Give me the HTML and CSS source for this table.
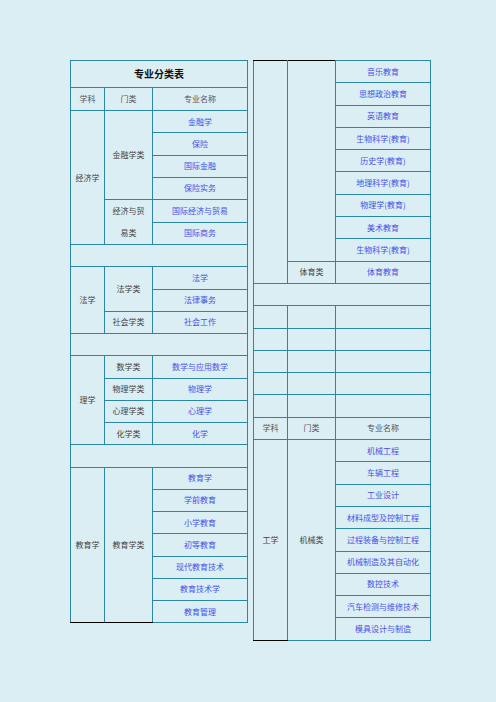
FILE: index.html
```html
<!DOCTYPE html>
<html lang="zh-CN">
<head>
<meta charset="utf-8">
<title>专业分类表</title>
<link rel="stylesheet" href="styles.css">
</head>
<body>
<div class="page">
  <table class="tbl tbl-left">
    <colgroup><col class="c1"><col class="c2"><col class="c3"></colgroup>
    <tr class="title-row"><td colspan="3" class="title">专业分类表</td></tr>
    <tr class="head-row"><td class="hd">学科</td><td class="hd">门类</td><td class="hd">专业名称</td></tr>
    <tr><td rowspan="6" class="cat">经济学</td><td rowspan="4" class="cat">金融学类</td><td class="major">金融学</td></tr>
    <tr><td class="major">保险</td></tr>
    <tr><td class="major">国际金融</td></tr>
    <tr><td class="major">保险实务</td></tr>
    <tr><td rowspan="2" class="cat wrap">经济与贸易类</td><td class="major">国际经济与贸易</td></tr>
    <tr><td class="major">国际商务</td></tr>
    <tr><td colspan="3"></td></tr>
    <tr><td rowspan="3" class="cat">法学</td><td rowspan="2" class="cat">法学类</td><td class="major">法学</td></tr>
    <tr><td class="major">法律事务</td></tr>
    <tr><td class="cat">社会学类</td><td class="major">社会工作</td></tr>
    <tr><td colspan="3"></td></tr>
    <tr><td rowspan="4" class="cat">理学</td><td class="cat">数学类</td><td class="major">数学与应用数学</td></tr>
    <tr><td class="cat">物理学类</td><td class="major">物理学</td></tr>
    <tr><td class="cat">心理学类</td><td class="major">心理学</td></tr>
    <tr><td class="cat">化学类</td><td class="major">化学</td></tr>
    <tr><td colspan="3"></td></tr>
    <tr><td rowspan="7" class="cat end">教育学</td><td rowspan="7" class="cat end">教育学类</td><td class="major">教育学</td></tr>
    <tr><td class="major">学前教育</td></tr>
    <tr><td class="major">小学教育</td></tr>
    <tr><td class="major">初等教育</td></tr>
    <tr><td class="major">现代教育技术</td></tr>
    <tr><td class="major">教育技术学</td></tr>
    <tr><td class="major">教育管理</td></tr>
  </table>

  <table class="tbl tbl-right">
    <colgroup><col class="c1"><col class="c2"><col class="c3"></colgroup>
    <tr><td rowspan="10" class="cat start"></td><td rowspan="9" class="cat start"></td><td class="major">音乐教育</td></tr>
    <tr><td class="major">思想政治教育</td></tr>
    <tr><td class="major">英语教育</td></tr>
    <tr><td class="major">生物科学(教育)</td></tr>
    <tr><td class="major">历史学(教育)</td></tr>
    <tr><td class="major">地理科学(教育)</td></tr>
    <tr><td class="major">物理学(教育)</td></tr>
    <tr><td class="major">美术教育</td></tr>
    <tr><td class="major">生物科学(教育)</td></tr>
    <tr><td class="cat">体育类</td><td class="major">体育教育</td></tr>
    <tr><td colspan="3"></td></tr>
    <tr><td></td><td></td><td></td></tr>
    <tr><td></td><td></td><td></td></tr>
    <tr><td></td><td></td><td></td></tr>
    <tr><td></td><td></td><td></td></tr>
    <tr><td></td><td></td><td></td></tr>
    <tr class="head-row2"><td class="hd">学科</td><td class="hd">门类</td><td class="hd">专业名称</td></tr>
    <tr><td rowspan="9" class="cat end">工学</td><td rowspan="9" class="cat">机械类</td><td class="major">机械工程</td></tr>
    <tr><td class="major">车辆工程</td></tr>
    <tr><td class="major">工业设计</td></tr>
    <tr><td class="major">材料成型及控制工程</td></tr>
    <tr><td class="major">过程装备与控制工程</td></tr>
    <tr><td class="major">机械制造及其自动化</td></tr>
    <tr><td class="major">数控技术</td></tr>
    <tr><td class="major">汽车检测与维修技术</td></tr>
    <tr><td class="major">模具设计与制造</td></tr>
  </table>
</div>
</body>
</html>
```

FILE: styles.css
```css
html, body {
  margin: 0;
  padding: 0;
  background: #dbeef4;
}

.page {
  display: flex;
  align-items: flex-start;
  gap: 5px;
  padding: 60px 0 0 70px;
  font-family: "Noto Sans CJK SC", "Noto Sans", sans-serif;
}

.tbl {
  border-collapse: collapse;
  table-layout: fixed;
  width: 177px;
}

.c1 { width: 34px; }
.c2 { width: 48px; }
.c3 { width: 95px; }

.tbl td {
  border: 1px solid #2b86a0;
  padding: 0 4px;
  height: 21.3px;
  text-align: center;
  vertical-align: middle;
  font-size: 8px;
  line-height: 10px;
  color: #444;
  white-space: nowrap;
  overflow: hidden;
}

.tbl-left tr td { height: 21.26px; }

.tbl .title-row td {
  height: 26px;
}

.tbl .head-row td {
  height: 22px;
}

.title {
  font-size: 10px !important;
  font-weight: bold;
  color: #111 !important;
}

.hd {
  color: #555 !important;
}

.cat {
  color: #444;
}

.major {
  color: #4550e8 !important;
}

.tbl td.wrap {
  white-space: normal;
  padding: 0 5px;
  line-height: 22px;
}

.tbl td.end {
  border-bottom-color: #000;
}

.tbl td.start {
  border-top-color: #000;
}
```
